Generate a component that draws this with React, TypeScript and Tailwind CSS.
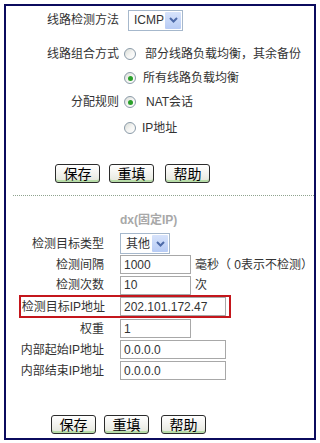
import React from "react";

const FONT = {
  fontFamily: '"Liberation Sans", Arial, "Noto Sans CJK SC", sans-serif',
};

function Radio({ checked }: { checked?: boolean }) {
  return (
    <span className="flex h-[12px] w-[12px] shrink-0 items-center justify-center rounded-full border border-[#8a9aa8] bg-gradient-to-br from-[#d8dcd6] via-[#f4f4f2] to-white">
      {checked ? <span className="h-[5px] w-[5px] rounded-full bg-[#2aa02a]" /> : null}
    </span>
  );
}

function Select({ value, width }: { value: string; width: string }) {
  return (
    <div className={`flex h-[21px] items-center border border-[#a6b8cc] bg-white ${width}`}>
      <span className="flex-1 whitespace-nowrap pl-[5px] text-[12px] leading-none text-[#333]">{value}</span>
      <span className="mr-[1px] flex h-[17px] w-[16px] items-center justify-center rounded-[1px] bg-gradient-to-b from-[#d7e3fb] to-[#b7cbf5]">
        <svg width="9" height="6" viewBox="0 0 9 6">
          <path d="M1 1 L4.5 4.5 L8 1" fill="none" stroke="#4d6aa8" strokeWidth="2" />
        </svg>
      </span>
    </div>
  );
}

function Btn({ text }: { text: string }) {
  return (
    <button
      type="button"
      className="flex h-[19px] w-[45px] items-center justify-center rounded-[3px] border border-[#2b2b2b] bg-gradient-to-b from-white via-[#f3f3ef] to-[#e4e6dc] text-[14px] leading-none text-black shadow-[inset_0_-2px_0_#b7dca8]"
    >
      {text}
    </button>
  );
}

function Field({ value, width }: { value: string; width: string }) {
  return (
    <div className={`flex h-[19px] shrink-0 items-center border border-[#a8a8a8] bg-white pl-[3px] text-[12px] leading-none text-[#333] ${width}`}>
      {value}
    </div>
  );
}

function Row({ label, children, h = "h-[21px]" }: { label: string; children: React.ReactNode; h?: string }) {
  return (
    <div className={`flex items-center ${h}`}>
      <div className="w-[98px] shrink-0 whitespace-nowrap text-right text-[12px] leading-none text-[#333]">{label}</div>
      <div className="ml-[16px] flex items-center gap-[3px] whitespace-nowrap text-[12px] leading-none text-[#333]">{children}</div>
    </div>
  );
}

export default function App() {
  return (
    <div className="h-[443px] w-[320px] bg-white pl-[4px] pt-[4px]" style={FONT}>
      <div className="flex h-[436px] w-[312px] flex-col border-2 border-[#0b0b5e]">
        <div className="mt-[3px] flex h-[22px] items-center">
          <div className="w-[113px] text-right text-[12px] leading-none text-[#333]">线路检测方法</div>
          <div className="ml-[9px]">
            <Select value="ICMP" width="w-[55px]" />
          </div>
        </div>

        <div className="mt-[11px] flex h-[24px] items-center">
          <div className="w-[113px] text-right text-[12px] leading-none text-[#333]">线路组合方式</div>
          <div className="ml-[5px] flex items-center whitespace-nowrap text-[12px] leading-none text-[#333]">
            <Radio />
            <span className="ml-[9px]">部分线路负载均衡，其余备份</span>
          </div>
        </div>
        <div className="flex h-[24px] items-center pl-[118px] text-[12px] leading-none text-[#333]">
          <Radio checked />
          <span className="ml-[7px]">所有线路负载均衡</span>
        </div>
        <div className="flex h-[24px] items-center">
          <div className="w-[113px] text-right text-[12px] leading-none text-[#333]">分配规则</div>
          <div className="ml-[5px] flex items-center text-[12px] leading-none text-[#333]">
            <Radio checked />
            <span className="ml-[10px]">NAT会话</span>
          </div>
        </div>
        <div className="mt-[2px] flex h-[24px] items-center pl-[118px] text-[12px] leading-none text-[#333]">
          <Radio />
          <span className="ml-[6px]">IP地址</span>
        </div>

        <div className="mt-[24px] flex gap-[9px] pl-[49px]">
          <Btn text="保存" />
          <Btn text="重填" />
          <div className="ml-[2px]">
            <Btn text="帮助" />
          </div>
        </div>

        <div className="ml-[7px] mt-[12px] border-t border-dotted border-[#8fa38f]" />

        <div className="mt-[16px] flex h-[16px] items-center pl-[114px] text-[12px] font-bold leading-none text-[#a8a8a8]">
          dx(固定IP)
        </div>

        <div className="mt-[5px]">
          <Row label="检测目标类型">
            <Select value="其他" width="w-[50px]" />
          </Row>
        </div>
        <Row label="检测间隔">
          <Field value="1000" width="w-[71px]" />
          <span className="ml-[1px]">毫秒（ 0表示不检测）</span>
        </Row>
        <Row label="检测次数" h="h-[20px]">
          <Field value="10" width="w-[71px]" />
          <span className="ml-[1px]">次</span>
        </Row>
        <div className="ml-[13px] flex h-[23px] w-[212px] items-center border-2 border-[#c4161c]">
          <div className="w-[84px] shrink-0 whitespace-nowrap text-right text-[12px] leading-none text-[#333]">检测目标IP地址</div>
          <div className="ml-[15px]">
            <Field value="202.101.172.47" width="w-[106px]" />
          </div>
        </div>
        <Row label="权重">
          <Field value="1" width="w-[71px]" />
        </Row>
        <Row label="内部起始IP地址">
          <Field value="0.0.0.0" width="w-[106px]" />
        </Row>
        <Row label="内部结束IP地址">
          <Field value="0.0.0.0" width="w-[106px]" />
        </Row>

        <div className="mt-[34px] flex gap-[8px] pl-[45px]">
          <Btn text="保存" />
          <Btn text="重填" />
          <div className="ml-[4px]">
            <Btn text="帮助" />
          </div>
        </div>
      </div>
    </div>
  );
}
